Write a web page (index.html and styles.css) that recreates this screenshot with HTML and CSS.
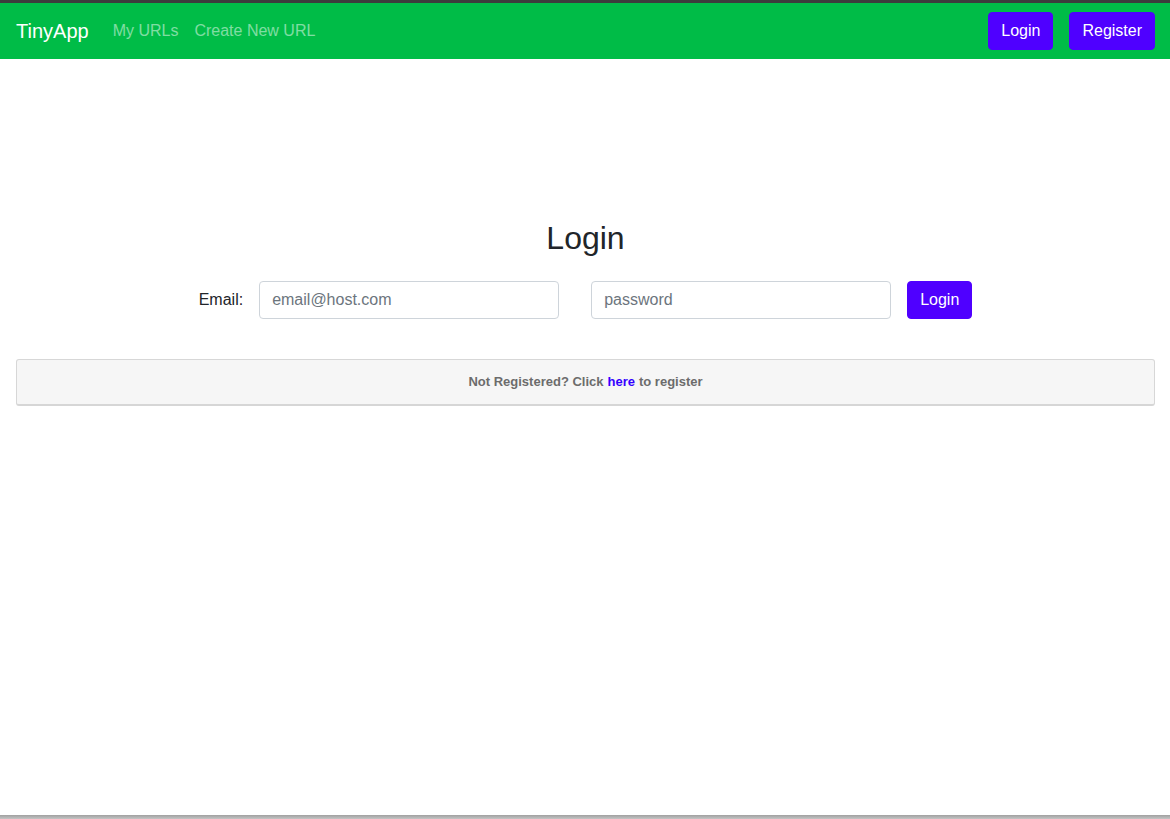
FILE: index.html
```html
<!DOCTYPE html>
<html lang="en">
<head>
<meta charset="utf-8">
<title>TinyApp</title>
<link rel="stylesheet" href="styles.css">
</head>
<body>
<div class="page">
  <div class="topline"></div>
  <nav class="navbar">
    <a class="brand" href="#">TinyApp</a>
    <ul class="nav-links">
      <li><a href="#">My URLs</a></li>
      <li><a href="#">Create New URL</a></li>
    </ul>
    <div class="nav-actions">
      <button class="btn">Login</button>
      <button class="btn">Register</button>
    </div>
  </nav>
  <main class="main">
    <h2 class="title">Login</h2>
    <form class="login-form">
      <label class="label" for="email">Email:</label>
      <input class="input" id="email" type="text" placeholder="email@host.com">
      <input class="input pw" type="password" placeholder="password">
      <button class="btn" type="button">Login</button>
    </form>
    <div class="card-footer">Not Registered? Click <a href="#">here</a> to register</div>
  </main>
  <div class="bottomline"></div>
</div>
</body>
</html>
```

FILE: styles.css
```css
* { box-sizing: border-box; }
html, body { margin: 0; padding: 0; }
body {
  font-family: "Liberation Sans", Arial, sans-serif;
  font-size: 16px;
  line-height: 1.5;
  color: #212529;
  background: #fff;
}
.page {
  height: 100vh;
  display: flex;
  flex-direction: column;
}
.topline {
  height: 3px;
  background: #3c3c3c;
  flex: none;
}
.navbar {
  flex: none;
  height: 56px;
  background: #00bc47;
  display: flex;
  align-items: center;
  padding: 0 15px 0 16px;
}
.brand {
  color: #fff;
  font-size: 20px;
  text-decoration: none;
  margin-right: 16px;
  line-height: 30px;
}
.nav-links {
  list-style: none;
  display: flex;
  margin: 0;
  padding: 0;
  gap: 0;
}
.nav-links a {
  display: block;
  padding: 8px 8px;
  color: rgba(255,255,255,0.5);
  text-decoration: none;
}
.nav-actions {
  margin-left: auto;
  display: flex;
  gap: 16px;
}
.btn {
  font-family: inherit;
  font-size: 16px;
  line-height: 24px;
  padding: 6px 12px;
  border: 1px solid #4f00ff;
  background: #4f00ff;
  color: #fff;
  border-radius: 4px;
  cursor: pointer;
}
.main {
  flex: 1;
  padding: 0 15px 0 16px;
}
.title {
  margin: 160px 0 0;
  text-align: center;
  font-size: 32px;
  font-weight: 500;
  line-height: 38px;
}
.login-form {
  display: flex;
  justify-content: center;
  align-items: center;
  margin-top: 24px;
  gap: 16px;
}
.input {
  width: 300px;
  height: 38px;
  padding: 6px 12px;
  font-family: inherit;
  font-size: 16px;
  color: #495057;
  border: 1px solid #ced4da;
  border-radius: 4px;
  background: #fff;
}
.input::placeholder { color: #6c757d; }
.input.pw { margin-left: 16px; }
.card-footer {
  margin-top: 40px;
  height: 47px;
  display: flex;
  align-items: center;
  justify-content: center;
  background: #f6f6f6;
  border: 1px solid rgba(0,0,0,0.125);
  border-bottom: 2px solid #d6d6d6;
  border-radius: 3px;
  font-size: 13px;
  font-weight: bold;
  color: #6c6c6c;
}
.card-footer a {
  color: #3500ff;
  text-decoration: none;
  margin: 0 4px;
}
.bottomline {
  flex: none;
  height: 4px;
  background: linear-gradient(#a0a0a0, #c4c4c4);
}
```
